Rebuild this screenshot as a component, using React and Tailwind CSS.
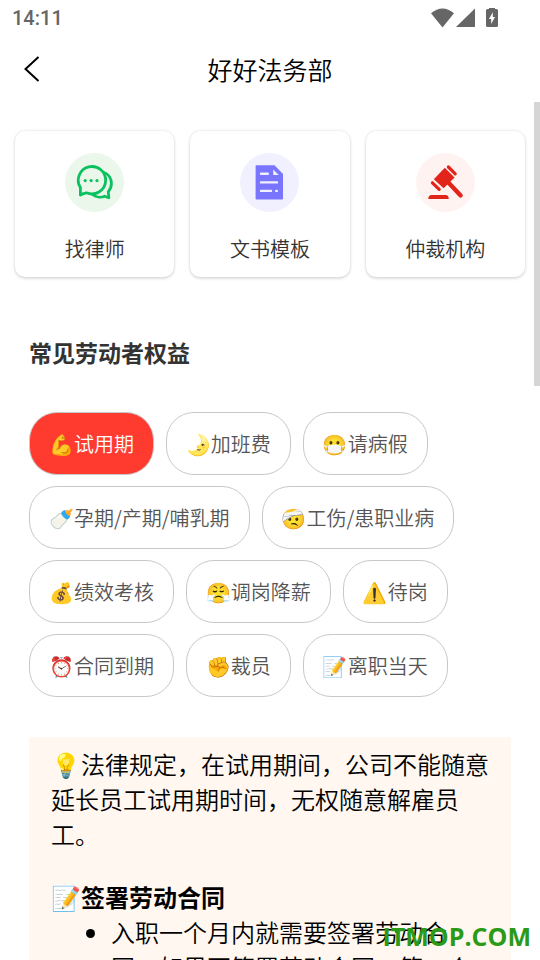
import { useState } from "react";

function LawyerIcon() {
  return (
    <svg viewBox="0 0 59 59" className="size-full" fill="none" stroke="#0ac15f" strokeWidth="2.8" strokeLinejoin="round" strokeLinecap="round" aria-hidden="true">
      <path d="M15.4 42V34.6A13.7 13.7 0 1 1 21.5 39.8Q18.5 40.2 15.4 42Z" />
      <path d="M38.6 19.2C43.8 21 46.4 26 46.4 30.6C46.4 34 45.2 36.6 43.3 38.6L43.8 44.8L39.6 43.2C35.5 45 30.5 44 27.5 41.5" />
      <g fill="#0ac15f" stroke="none">
        <circle cx="20.2" cy="27.6" r="1.6" />
        <circle cx="26.1" cy="27.6" r="1.6" />
        <circle cx="32" cy="27.6" r="1.6" />
      </g>
    </svg>
  );
}

function TemplateIcon() {
  return (
    <svg viewBox="0 0 59 59" className="size-full" aria-hidden="true">
      <path d="M16.5 12.3H34.5L43 21V45.5Q43 46.4 42.1 46.4H16.5Q15.6 46.4 15.6 45.5V13.2Q15.6 12.3 16.5 12.3Z" fill="#7a75ff" />
      <path d="M33.2 16.5V22H38.8Z" fill="#f1f0ff" />
      <path d="M21 20.8H27.8M21 29.4H37M21 37.9H31M36.2 37.9H36.8" stroke="#f1f0ff" strokeWidth="2.4" strokeLinecap="round" />
    </svg>
  );
}

function GavelIcon() {
  return (
    <svg viewBox="0 0 59 59" className="size-full" aria-hidden="true">
      <path d="M28.8 14.8L38.6 24.4L27.6 35.2L17.8 26.2Z" fill="#e1251b" />
      <path d="M32.4 14L39.2 20.8M16.4 29.8L23.2 36.4" stroke="#e1251b" strokeWidth="3.2" strokeLinecap="round" />
      <path d="M31 28L44.6 42.4" stroke="#e1251b" strokeWidth="4.4" strokeLinecap="round" />
      <path d="M12.2 46Q12.4 42 15.5 42H29.5Q32.6 42 32.8 46Z" fill="#e1251b" />
    </svg>
  );
}

const services = [
  { label: "找律师", Icon: LawyerIcon, tint: "bg-[#ebf7eb]" },
  { label: "文书模板", Icon: TemplateIcon, tint: "bg-[#f1f0ff]" },
  { label: "仲裁机构", Icon: GavelIcon, tint: "bg-[#fff3f2]" },
];

const topics = [
  "💪试用期",
  "🌛加班费",
  "😷请病假",
  "🍼孕期/产期/哺乳期",
  "🤕工伤/患职业病",
  "💰绩效考核",
  "😤调岗降薪",
  "⚠️待岗",
  "⏰合同到期",
  "✊裁员",
  "📝离职当天",
];

function StatusBar() {
  return (
    <div className="flex h-9 shrink-0 items-center justify-between pl-3 pr-[42px] text-[#666666]">
      <span className="font-['Roboto',sans-serif] text-xl font-medium leading-6">14:11</span>
      <div className="flex items-center" aria-hidden="true">
        <svg viewBox="0 0 23 20" className="mr-[2px] h-5 w-[23px]" fill="currentColor">
          <path d="M0 5.2Q11.5 -4.4 23 5.2L11.5 19.4Z" />
        </svg>
        <svg viewBox="0 0 19 20" className="mr-[11px] h-5 w-[19px]" fill="currentColor">
          <path d="M19 0.5V19H0Z" />
        </svg>
        <svg viewBox="0 0 12 20" className="mb-px h-5 w-3" fill="currentColor">
          <path d="M3 0H9V1H10.5Q12 1 12 2.5V17.5Q12 19 10.5 19H1.5Q0 19 0 17.5V2.5Q0 1 1.5 1H3Z" />
          <path d="M6.8 4.2V9H9L5.2 16V11H3Z" fill="#fff" />
        </svg>
      </div>
    </div>
  );
}

export default function App() {
  const [active, setActive] = useState(0);
  return (
    <div lang="zh-CN" className="relative flex h-screen flex-col overflow-hidden bg-white font-['Noto_Sans_CJK_SC','Noto_Color_Emoji',sans-serif] font-[350]">
      <StatusBar />
      <header className="grid h-[66px] shrink-0 grid-cols-[1fr_auto_1fr] items-center px-5">
        <button type="button" aria-label="返回" className="justify-self-start">
          <svg viewBox="0 0 24 28" className="h-7 w-6" fill="none" stroke="#000" strokeWidth="2">
            <path d="M18.5 2L5.5 14L18.5 26" />
          </svg>
        </button>
        <h1 className="text-[25px] leading-9 text-black">好好法务部</h1>
      </header>

      <main className="min-h-0 flex-1 overflow-hidden pt-[29px]">
        <nav className="grid grid-cols-3 gap-4 px-[15px]">
          {services.map(({ label, Icon, tint }) => (
            <button key={label} type="button" className="flex flex-col items-center rounded-[10px] bg-white pb-[13px] pt-[22px] shadow-[0_0_3px_rgba(0,0,0,0.14),0_2px_3px_rgba(0,0,0,0.1)]">
              <span className={`size-[59px] rounded-full ${tint}`}>
                <Icon />
              </span>
              <span className="mt-[22px] text-xl leading-[30px] text-[#333333]">{label}</span>
            </button>
          ))}
        </nav>

        <section className="px-[29px] pt-[57px]">
          <h2 className="text-[23px] font-bold leading-9 text-[#333333]">常见劳动者权益</h2>
          <div className="mt-[42px] flex flex-wrap gap-x-3 gap-y-[11px]">
            {topics.map((topic, i) => (
              <button
                key={topic}
                type="button"
                aria-pressed={i === active}
                onClick={() => setActive(i)}
                className={`h-[63px] rounded-[28px] border border-[#c8c8c8] px-[19px] pt-px text-xl ${i === active ? "bg-[#ff3b30] text-white" : "bg-white text-[#555555]"}`}
              >
                {topic}
              </button>
            ))}
          </div>

          <article className="mt-10 bg-[#fff7f0] px-[22px] py-[9px] text-2xl leading-[35px] text-black">
            <p>💡法律规定，在试用期间，公司不能随意延长员工试用期时间，无权随意解雇员工。</p>
            <h3 className="mt-7 font-bold">📝签署劳动合同</h3>
            <ul className="list-disc pl-[60px]">
              <li>入职一个月内就需要签署劳动合同，如果不签署劳动合同，第二个</li>
            </ul>
          </article>
        </section>
      </main>

      <div className="absolute right-0 top-[102px] h-[284px] w-[6px] bg-[#d5d5d5]" />
      <div className="absolute bottom-[6px] right-[9px] font-['Open_Sans',sans-serif] text-[25px] font-bold leading-9 text-[#2a9a17]">ITMOP.COM</div>
    </div>
  );
}
